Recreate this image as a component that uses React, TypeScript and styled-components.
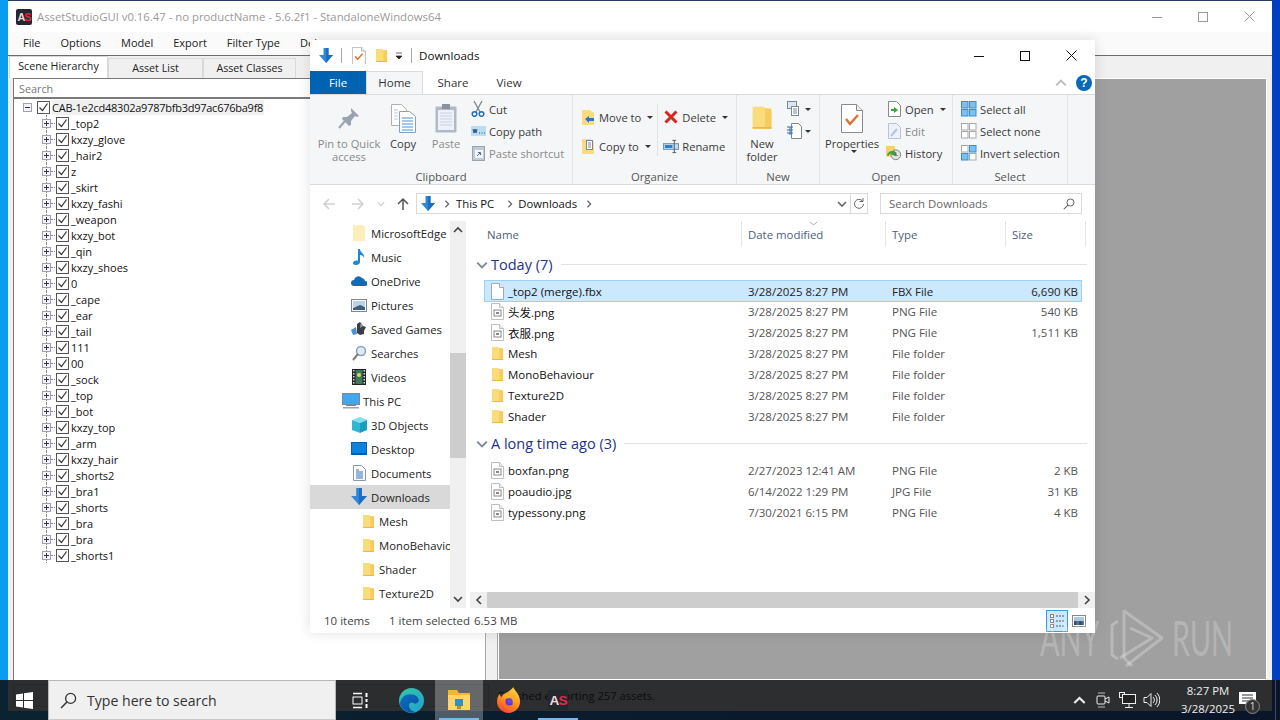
import React from "react";
import styled, { createGlobalStyle } from "styled-components";

const Global = createGlobalStyle`
  html, body { margin: 0; padding: 0; width: 1280px; height: 720px; overflow: hidden; }
  body { font-family: "Open Sans", "Noto Sans CJK SC", sans-serif; font-size: 11.5px; color: #1a1a1a; }
  #root { width: 1280px; height: 720px; }
  * { box-sizing: border-box; }
`;

const Desktop = styled.div`
  position: relative; width: 1280px; height: 720px; overflow: hidden;
  background: linear-gradient(90deg, #0a9cf0 0, #0a9cf0 8px, #0040c0 1272px);
`;

/* ---------- AssetStudio window ---------- */
const StudioWindow = styled.div`
  position: absolute; left: 8px; top: 0; width: 1264px; height: 711px;
  display: flex; flex-direction: column; background: #f0f0f0; border-top: 1px solid #2b3a67;
`;
const StudioTitle = styled.div`
  height: 31px; flex: none; display: flex; align-items: center; background: #fff; padding-left: 8px; color: #9a9a9a; font-size: 11.34px;
`;
const AppLogo = styled.span<{ $size: number }>`
  width: ${p => p.$size}px; height: ${p => p.$size}px; flex: none; border-radius: 2px; background: #23282e; color: #f6d6dc;
  font: bold ${p => p.$size * 0.68}px "Liberation Sans", sans-serif; display: flex; align-items: center; justify-content: center; letter-spacing: -1px;
`;
const LogoS = styled.span` color: #e8264a; `;
const TitleText = styled.span` margin-left: 5px; flex: 1; white-space: nowrap; `;
const CaptionButton = styled.span<{ $w?: number }>`
  width: ${p => p.$w ?? 46}px; height: 30px; flex: none; display: flex; align-items: center; justify-content: center;
`;
const MenuBar = styled.div`
  height: 24px; flex: none; display: flex; align-items: center; background: #fafafa; border-bottom: 1px solid #6b6b6b; padding: 0 0 2px 15px; gap: 20px; font-size: 11px; color: #222;
`;
const StudioBody = styled.div` flex: 1; display: flex; min-height: 0; padding-left: 5px; `;
const LeftPane = styled.div` width: 472px; flex: none; display: flex; flex-direction: column; `;
const TabStrip = styled.div` height: 22px; flex: none; display: flex; align-items: flex-end; margin-left: -4px; `;
const StudioTab = styled.div<{ $active?: boolean; $w: number }>`
  width: ${p => p.$w}px; height: ${p => (p.$active ? 22 : 20)}px; padding-bottom: ${p => (p.$active ? 3 : 1)}px; display: flex; align-items: center; justify-content: center; font-size: 10.7px; color: #222;
  background: ${p => (p.$active ? "#fff" : "#f0f0f0")}; border: 1px solid #d9d9d9; border-bottom: 0;
`;
const SearchInput = styled.div`
  height: 21px; flex: none; background: #fff; border: 1px solid #7a7a7a; border-bottom-width: 2px; border-right: 0; padding-left: 5px; color: #777; display: flex; align-items: center; font-size: 10.8px;
`;
const Tree = styled.div` flex: 1; background: #fff; border-left: 1px solid #7a7a7a; `;
const TreeRow = styled.div<{ $root?: boolean }>`
  position: relative; height: 16px; display: flex; align-items: center; padding-left: ${p => (p.$root ? 9 : 28)}px; font-size: 11px; color: #111; white-space: nowrap;
`;
const Toggle = styled.span`
  width: 9px; height: 9px; flex: none; border: 1px solid #a0a0b8; background: #f4f4fa; position: relative; margin-right: 5px;
  &::before { content: ""; position: absolute; left: 1px; right: 1px; top: 3px; height: 1px; background: #333; }
`;
const Plus = styled.span`
  position: absolute; left: 3px; top: 1px; width: 1px; height: 5px; background: #333;
`;
const Dots = styled.span`
  position: absolute; left: 32px; top: 0; bottom: 0; border-left: 1px dotted #888;
  &::after { content: ""; position: absolute; left: 4px; top: 8px; width: 4px; border-top: 1px dotted #888; }
`;
const Check = styled.span`
  width: 13px; height: 13px; flex: none; border: 1px solid #555; background: #fff; margin-right: 2px; display: flex;
`;
const TreeLabel = styled.span<{ $on?: boolean }>`
  background: ${p => (p.$on ? "#f0f0f0" : "transparent")}; line-height: 15px; ${p => p.$on ? "letter-spacing: -0.25px; padding-right: 1px;" : ""}
`;
const Splitter = styled.div` width: 13px; flex: none; border-left: 1px solid #a8a8a8; border-right: 1px solid #a8a8a8; background: #f0f0f0; `;
const RightPane = styled.div` flex: 1; display: flex; flex-direction: column; padding: 22px 5px 0 0; `;
const GreyCanvas = styled.div` flex: 1; background: #a0a0a0; border: 1px solid #fff; `;
const StudioStatus = styled.div`
  height: 31px; flex: none; display: flex; align-items: center; padding: 0 0 0 5px; color: #000; font-size: 11.2px;
`;
const Progress = styled.div` width: 476px; height: 23px; border: 1px solid #bcbcbc; background: #e6e6e6; margin-right: 9px; `;

/* ---------- Explorer window ---------- */
const ExplorerWindow = styled.div`
  position: absolute; left: 310px; top: 40px; width: 785px; height: 593px; background: #fff; display: flex; flex-direction: column;
  box-shadow: 0 0 12px rgba(0,0,0,.12);
`;
const ExplorerTitle = styled.div` height: 31px; flex: none; display: flex; align-items: center; padding-left: 8px; font-size: 11.6px; color: #111; `;
const QatSep = styled.span` width: 1px; height: 15px; background: #a8a8a8; margin: 0 7px; flex: none; `;
const QatSlot = styled.span<{ $w: number }>` width: ${p => p.$w}px; flex: none; display: flex; justify-content: center; `;
const ExplorerCaption = styled.div` margin-left: auto; display: flex; padding-right: 1px; `;
const RibbonTabs = styled.div` height: 23px; flex: none; display: flex; align-items: stretch; position: relative; font-size: 11.5px; color: #333; `;
const FileTab = styled.div` width: 56px; background: #0063b1; color: #fff; display: flex; align-items: center; justify-content: center; padding-bottom: 1px; `;
const RibbonTab = styled.div<{ $w: number; $active?: boolean }>`
  width: ${p => p.$w}px; display: flex; align-items: center; justify-content: center; padding-bottom: 1px;
  ${p => p.$active ? "border: 1px solid #dadbdc; border-bottom: 0; background: #f5f6f7;" : ""}
`;
const RibbonRight = styled.div` margin-left: auto; display: flex; align-items: center; gap: 9px; padding-right: 3px; `;
const Help = styled.span`
  width: 16px; height: 16px; border-radius: 50%; background: #0a68b8; color: #fff; font: bold 12px "Liberation Sans", sans-serif; display: flex; align-items: center; justify-content: center;
`;
const Ribbon = styled.div` height: 91px; flex: none; display: flex; background: #f5f6f7; border-top: 1px solid #dadbdc; border-bottom: 1px solid #dadbdc; `;
const RibbonGroup = styled.div<{ $w: number }>`
  width: ${p => p.$w}px; flex: none; display: flex; flex-direction: column; border-right: 1px solid #e2e3e4;
`;
const GroupBody = styled.div` height: 75px; flex: none; display: flex; align-items: flex-start; `;
const GroupLabel = styled.div` flex: 1; text-align: center; font-size: 11.3px; color: #555; line-height: 13px; `;
const BigButton = styled.div<{ $w: number; $off?: boolean; $ml?: number }>`
  width: ${p => p.$w}px; flex: none; margin-left: ${p => p.$ml ?? 0}px; display: flex; flex-direction: column; align-items: center; padding-top: 6px; text-align: center; line-height: 13px;
  color: ${p => (p.$off ? "#8a8a8a" : "#3a3a3a")}; font-size: 11.2px;
`;
const BigIcon = styled.span` height: 34px; display: flex; align-items: center; justify-content: center; margin-bottom: 2px; `;
const SmallColumn = styled.div<{ $gap?: number; $pt?: number; $ml?: number }>`
  display: flex; flex-direction: column; gap: ${p => p.$gap ?? 0}px; padding-top: ${p => p.$pt ?? 3}px; margin-left: ${p => p.$ml ?? 0}px;
`;
const SmallButton = styled.div<{ $off?: boolean }>`
  height: 22px; display: flex; align-items: center; gap: 3px; white-space: nowrap; font-size: 11.2px; color: ${p => (p.$off ? "#8a8a8a" : "#3a3a3a")};
`;
const SmallIcon = styled.span` width: 16px; height: 16px; flex: none; display: flex; align-items: center; justify-content: center; `;
const Caret = styled.span<{ $tight?: boolean }>`
  display: inline-block; width: 0; height: 0; border-left: 3px solid transparent; border-right: 3px solid transparent; border-top: 3px solid #333; margin-left: ${p => (p.$tight ? -1 : 3)}px;
`;
const VSep = styled.span` width: 1px; height: 52px; background: #e2e3e4; margin: 9px 5px 0 4px; flex: none; `;
const AddressRow = styled.div` height: 36px; flex: none; display: flex; align-items: center; padding-top: 1px; `;
const NavArrows = styled.div` width: 106px; flex: none; display: flex; align-items: center; padding-left: 11px; `;
const NavSlot = styled.span<{ $w: number }>` width: ${p => p.$w}px; flex: none; display: flex; justify-content: center; `;
const AddressBox = styled.div`
  width: 452px; height: 21px; flex: none; border: 1px solid #d9d9d9; display: flex; align-items: center; padding-left: 2px; font-size: 11.3px; color: #111;
`;
const Crumb = styled.span` margin: 0 8px 0 0; `;
const AddressEnd = styled.span` margin-left: auto; display: flex; align-items: center; height: 100%; `;
const AddrBtn = styled.span<{ $border?: boolean }>` width: 17px; height: 100%; display: flex; align-items: center; justify-content: center; ${p => p.$border ? "border-left: 1px solid #d9d9d9;" : ""} `;
const SearchBox = styled.div`
  width: 202px; height: 21px; margin-left: 12px; flex: none; border: 1px solid #d9d9d9; display: flex; align-items: center; justify-content: space-between; padding: 0 6px 0 8px; font-size: 11.4px; color: #666;
`;
const Body = styled.div` flex: 1; display: flex; min-height: 0; `;
const NavPane = styled.div` width: 140px; flex: none; overflow: hidden; display: flex; flex-direction: column; `;
const NavRow = styled.div<{ $indent: number; $on?: boolean }>`
  height: 24px; flex: none; display: flex; align-items: center; padding-left: ${p => p.$indent}px; gap: 3px; font-size: 11.3px; color: #222; white-space: nowrap; background: ${p => (p.$on ? "#d9d9d9" : "transparent")};
`;
const NavIcon = styled.span<{ $w?: number }>` width: ${p => p.$w ?? 18}px; height: 18px; flex: none; display: flex; align-items: center; justify-content: center; `;
const VScroll = styled.div` width: 16px; flex: none; background: #f0f0f0; display: flex; flex-direction: column; `;
const ScrollArrow = styled.div` height: 18px; flex: none; display: flex; align-items: center; justify-content: center; `;
const VTrack = styled.div` flex: 1; padding-top: 114px; padding-bottom: 132px; display: flex; `;
const VThumb = styled.div` flex: 1; background: #cdcdcd; `;
const ListPane = styled.div` flex: 1; margin-left: 4px; display: flex; flex-direction: column; min-width: 0; `;
const ListBody = styled.div` flex: 1; `;
const ColHeaders = styled.div` height: 25px; display: grid; grid-template-columns: 272px 144px 120px 80px; font-size: 11.4px; color: #4c607a; `;
const ColHead = styled.div<{ $first?: boolean }>`
  position: relative; display: flex; align-items: center; padding: 2px 0 0 ${p => (p.$first ? 17 : 6)}px; border-right: 1px solid #e5e5e5;
`;
const SortMark = styled.span` position: absolute; left: 67px; top: 0; line-height: 0; `;
const GroupHead = styled.div<{ $mt: number }>`
  height: 21px; margin-top: ${p => p.$mt}px; display: flex; align-items: center; padding: 0 8px 0 6px; font-size: 14.5px; color: #1e3287; white-space: nowrap;
`;
const GroupChevron = styled.span` width: 15px; flex: none; display: flex; `;
const GroupRule = styled.span` flex: 1; height: 1px; background: #e2e2e2; margin: 0 0 0 8px; `;
const RowList = styled.div<{ $mt: number }>` margin-top: ${p => p.$mt}px; margin-left: 14px; width: 598px; display: flex; flex-direction: column; `;
const FileRow = styled.div<{ $on?: boolean }>`
  height: 21px; display: grid; grid-template-columns: 263px 144px 120px 66px; align-items: center; font-size: 11.5px; color: ${p => (p.$on ? "#222" : "#555")};
  ${p => p.$on ? "height: 22px; margin-bottom: -1px; background: #cce8ff; border: 1px solid #99d1ff;" : "border: 1px solid transparent;"}
`;
const FileName = styled.span` display: flex; align-items: center; gap: 3px; padding-left: 5px; color: #111; white-space: nowrap; `;
const FileIcon = styled.span` width: 15px; height: 18px; flex: none; display: flex; align-items: center; justify-content: center; `;
const FileSize = styled.span` text-align: right; `;
const HScroll = styled.div` height: 16px; flex: none; display: flex; background: #f0f0f0; `;
const HArrow = styled.div` width: 17px; flex: none; display: flex; align-items: center; justify-content: center; `;
const HThumb = styled.div` flex: 1; background: #cdcdcd; `;
const StatusBar = styled.div` height: 25px; flex: none; display: flex; align-items: center; padding-left: 14px; font-size: 11.5px; color: #444; `;
const StatusItem = styled.span<{ $w: number }>` width: ${p => p.$w}px; flex: none; white-space: nowrap; `;
const ViewButtons = styled.div` margin-left: auto; display: flex; align-items: center; padding-right: 5px; `;
const ViewBtn = styled.span<{ $on?: boolean }>`
  width: 22px; height: 22px; display: flex; align-items: center; justify-content: center; ${p => p.$on ? "background: #cce8ff; border: 1px solid #3d9ad6;" : ""}
`;

/* ---------- Taskbar ---------- */
const Taskbar = styled.div`
  position: absolute; left: 0; right: 0; bottom: 0; height: 40px; display: flex; align-items: stretch; background: rgba(12, 14, 16, 0.86); color: #fff;
`;
const StartBtn = styled.div` width: 48px; flex: none; display: flex; align-items: center; justify-content: center; `;
const TaskSearch = styled.div`
  width: 288px; flex: none; background: #f0f0f0; border: 1px solid #b8b8b8; border-bottom: 1px solid #c8c8c8; display: flex; align-items: center; gap: 10px; padding-left: 11px; color: #333; font-size: 14.1px;
`;
const TaskItem = styled.div<{ $active?: boolean; $running?: boolean; $w?: number }>`
  position: relative; width: ${p => p.$w ?? 48}px; flex: none; display: flex; align-items: center; justify-content: center;
  background: ${p => (p.$active ? "rgba(255,255,255,.28)" : "transparent")};
  ${p => p.$running ? `&::after { content: ""; position: absolute; left: 4px; right: 4px; bottom: 0; height: 2px; background: #76b9ed; }` : ""}
`;
const Tray = styled.div` margin-left: auto; display: flex; align-items: center; `;
const TrayIcon = styled.span` width: 24px; height: 40px; display: flex; align-items: center; justify-content: center; `;
const Clock = styled.div` width: 60px; margin: -1px 0 0 15px; text-align: center; font-size: 11.4px; line-height: 18px; color: #eee; white-space: nowrap; `;
const Notify = styled.div` position: relative; width: 18px; height: 40px; display: flex; align-items: center; justify-content: center; `;
const NotifyBadge = styled.span`
  position: absolute; left: 7px; bottom: 6px; width: 15px; height: 15px; border-radius: 50%; background: #333; border: 1px solid #888; font-size: 10px; line-height: 13px; text-align: center; color: #ddd;
`;
const ShowDesktop = styled.div` width: 5px; height: 40px; margin-left: 19px; border-left: 1px solid rgba(255,255,255,.22); `;

/* ---------- Watermark ---------- */
const Watermark = styled.div`
  position: absolute; left: 1040px; top: 608px; height: 60px; display: flex; align-items: center; color: rgba(255,255,255,.24); pointer-events: none;
  font: 400 48px/1 Lato, "Open Sans", sans-serif;
`;
const WatermarkWord = styled.span<{ $w: number; $ml?: number }>`
  display: block; width: ${p => p.$w}px; margin-left: ${p => p.$ml ?? 0}px; white-space: nowrap; transform: scaleX(0.6); transform-origin: left center;
`;

/* ---------- Icons ---------- */
const Folder = ({ s = 16 }: { s?: number }) => (
  <svg width={s} height={s * 1.15} viewBox="0 0 14 16">
    <path d="M1 1h7l1 1h4v13H1z" fill="#fbdc7c" />
    <path d="M9 2l4 1v12H9z" fill="#f4cc60" />
    <path d="M1 14h12v1H1z" fill="#e8b840" />
  </svg>
);
const PaleFolder = () => (
  <svg width="14" height="18" viewBox="0 0 14 18"><path d="M1 1h9l3 1v15H1z" fill="#fdedbb" /></svg>
);
const Doc = () => (
  <svg width="13" height="17" viewBox="0 0 13 17">
    <path d="M.5.5h8l4 4v12H.5z" fill="#fff" stroke="#bfbfbf" />
    <path d="M8.5.5v4h4" fill="#eee" stroke="#bfbfbf" />
    <rect x="3" y="7" width="7" height="6" fill="#fff" stroke="#888" />
    <rect x="5" y="9" width="3" height="2" fill="#888" />
  </svg>
);
const BlankDoc = () => (
  <svg width="13" height="17" viewBox="0 0 13 17">
    <path d="M.5.5h8l4 4v12H.5z" fill="#fff" stroke="#a8a8a8" />
    <path d="M8.5.5v4h4" fill="#f4f4f4" stroke="#a8a8a8" />
  </svg>
);
const DownArrow = ({ s = 16 }: { s?: number }) => (
  <svg width={s} height={s} viewBox="0 0 16 16">
    <path d="M5.500 0h5v7H15l-7 8-7-8h4.500z" fill="#2f87da" />
    <path d="M8 0h2.500v7H15l-7 8z" fill="#1d6cbf" />
  </svg>
);
const Chev = ({ d, c = "#555", s = 10 }: { d: "up" | "down" | "left" | "right"; c?: string; s?: number }) => {
  const p = { up: "M1 7l4-4 4 4", down: "M1 3l4 4 4-4", left: "M7 1L3 5l4 4", right: "M3 1l4 4-4 4" }[d];
  return <svg width={s} height={s} viewBox="0 0 10 10"><path d={p} fill="none" stroke={c} strokeWidth="1.600" /></svg>;
};
const ArrowLeft = ({ c }: { c: string }) => (
  <svg width="14" height="14" viewBox="0 0 14 14"><path d="M13 7H2M7 2L2 7l5 5" fill="none" stroke={c} strokeWidth="1.500" /></svg>
);
const ArrowRight = ({ c }: { c: string }) => (
  <svg width="14" height="14" viewBox="0 0 14 14"><path d="M1 7h11M7 2l5 5-5 5" fill="none" stroke={c} strokeWidth="1.500" /></svg>
);
const ArrowUp = ({ c }: { c: string }) => (
  <svg width="14" height="14" viewBox="0 0 14 14"><path d="M7 13V2M2 7l5-5 5 5" fill="none" stroke={c} strokeWidth="1.500" /></svg>
);
const PropsIcon = ({ s = 1 }: { s?: number }) => (
  <svg width={22 * s} height={29 * s} viewBox="0 0 22 29">
    <path d="M.5.5h15l6 6v22H.5z" fill="#fff" stroke="#8a8a8a" />
    <path d="M15.500.5v6h6" fill="#eee" stroke="#8a8a8a" />
    <path d="M5 15l4 5 8-9" fill="none" stroke="#e0702a" strokeWidth="2.400" />
  </svg>
);
const Pin = () => (
  <svg width="24" height="24" viewBox="0 0 24 24">
    <path d="M14 2l8 8-2 1-2-1-4 5 0 4-2 1-7-7 1-2 4 0 5-4-1-2z" fill="#9aa4b0" />
    <path d="M8 15l-6 7" stroke="#9aa4b0" strokeWidth="2" />
  </svg>
);
const CopyBig = () => (
  <svg width="25" height="29" viewBox="0 0 25 29">
    <path d="M.5.5h10l5 5v16H.5z" fill="#fff" stroke="#b0b0b0" />
    <path d="M8.500 7.500h10l6 5v16h-16z" fill="#fff" stroke="#8aa0b8" />
    {[14, 17, 20, 23, 26].map(y => <path key={y} d={`M11 ${y}h11`} stroke="#4a90d9" />)}
    {[6, 9, 12, 15].map(y => <path key={y} d={`M3 ${y}h4`} stroke="#b8c8e0" />)}
  </svg>
);
const PasteBig = () => (
  <svg width="22" height="30" viewBox="0 0 22 30">
    <rect x=".5" y="3.500" width="21" height="26" rx="1" fill="#b0bac6" />
    <rect x="3" y="7" width="16" height="20" fill="#eef1f7" />
    {[10, 13, 16, 19, 22].map(y => <path key={y} d={`M5 ${y}h12`} stroke="#c9d2e4" />)}
    <rect x="7" y="1" width="8" height="5" fill="#8a94a0" />
  </svg>
);
const Scissors = () => (
  <svg width="14" height="16" viewBox="0 0 14 16">
    <path d="M3 0l6 11M11 0L5 11" stroke="#7a8896" strokeWidth="1.300" fill="none" />
    <circle cx="3.500" cy="13" r="2.300" fill="none" stroke="#1f6fb5" strokeWidth="1.500" />
    <circle cx="10.500" cy="13" r="2.300" fill="none" stroke="#1f6fb5" strokeWidth="1.500" />
  </svg>
);
const CopyPath = () => (
  <svg width="15" height="10" viewBox="0 0 15 10">
    <rect width="15" height="10" fill="#bcdcf4" />
    <path d="M2 3l1 4 1-4 1 4 1-4M8 7h1M10.500 7h1M13 7h1" stroke="#24527a" fill="none" />
  </svg>
);
const PasteShortcut = () => (
  <svg width="13" height="16" viewBox="0 0 13 16">
    <rect x=".5" y="1.500" width="12" height="14" fill="#c2cad6" stroke="#9aa4b0" />
    <rect x="3" y="5" width="8" height="8" fill="#f2f4f8" />
    <path d="M5 11l3-3M6 7.500h2.500V10" stroke="#4d6a8c" fill="none" />
  </svg>
);
const MoveTo = () => (
  <svg width="14" height="17" viewBox="0 0 14 17">
    <path d="M1 1h8l4 3v12H1z" fill="#fbdc7c" />
    <path d="M4 10l4-3v2h5v3H8v2z" fill="#2a78c4" />
  </svg>
);
const CopyTo = () => (
  <svg width="14" height="17" viewBox="0 0 14 17">
    <path d="M1 1h8l4 3v12H1z" fill="#fbdc7c" />
    <rect x="5.500" y="2.500" width="6" height="9" fill="#fff" stroke="#7a8896" />
    <path d="M7 5h3M7 7h3M7 9h3" stroke="#7a8896" />
  </svg>
);
const Cross = () => (
  <svg width="14" height="14" viewBox="0 0 14 14"><path d="M1.500 1.500l11 11M12.500 1.500l-11 11" stroke="#d8261c" strokeWidth="3" /></svg>
);
const Rename = () => (
  <svg width="17" height="15" viewBox="0 0 17 15">
    <rect x=".5" y="4.500" width="16" height="6" fill="#bcdcf4" stroke="#5f8fb8" />
    <rect x="2" y="6" width="8" height="3" fill="#2a78c4" />
    <path d="M12 1v13M10 1h4M10 14h4" stroke="#555" fill="none" />
  </svg>
);
const EasyAccess = () => (
  <svg width="16" height="16" viewBox="0 0 16 16">
    <rect x=".5" y=".5" width="9" height="7" fill="#dbe6f2" stroke="#7a8896" />
    <rect x="4.500" y="5.500" width="7" height="9" fill="#fff" stroke="#7a8896" />
    <path d="M6 8h4M6 10h4M6 12h4" stroke="#7a8896" />
  </svg>
);
const NewItem = () => (
  <svg width="16" height="16" viewBox="0 0 16 16">
    <path d="M4.500.5h7l3 3v12h-10z" fill="#fff" stroke="#7a8896" />
    <path d="M0 4h6M0 7h6M0 10h6M3 4v8" stroke="#2a6fb5" fill="none" />
  </svg>
);
const OpenIcon = () => (
  <svg width="13" height="16" viewBox="0 0 13 16">
    <path d="M.5.5h8l4 4v11H.5z" fill="#fff" stroke="#8a8a8a" />
    <path d="M3 8h3V6l4 3-4 3v-2H3z" fill="#3aa13a" />
  </svg>
);
const EditIcon = () => (
  <svg width="13" height="16" viewBox="0 0 13 16">
    <path d="M.5.5h8l4 4v11H.5z" fill="#eef2f8" stroke="#b5c4d8" />
    <path d="M3 13l6-7" stroke="#b5c4d8" strokeWidth="2" />
  </svg>
);
const History = () => (
  <svg width="18" height="16" viewBox="0 0 18 16">
    <path d="M0 0h10v12H0z" fill="#f5d264" />
    <circle cx="11" cy="10" r="5.500" fill="#e0e4e8" stroke="#777" />
    <path d="M2 11a5 5 0 0 1 6-4l-1 2 3 1-1-4" fill="none" stroke="#3aa13a" strokeWidth="2" />
    <path d="M11 7v3l2 1" fill="none" stroke="#444" />
  </svg>
);
const Grid4 = ({ mode }: { mode: "all" | "none" | "inv" }) => {
  const on = "#7cc0f0", onS = "#3a8fd0", off = "#fff", offS = "#a8a8a8";
  const cell = (x: number, y: number, act: boolean) => (
    <rect key={`${x}${y}`} x={x + 0.5} y={y + 0.5} width="6.500" height="6.500" fill={act ? on : off} stroke={act ? onS : offS} />
  );
  const a = mode === "all", n = mode === "none";
  return (
    <svg width="16" height="16" viewBox="0 0 16 16">
      {cell(0, 0, a)}{cell(8, 0, a || !n)}{cell(0, 8, a || !n)}{cell(8, 8, a)}
    </svg>
  );
};
const Music = () => (
  <svg width="14" height="18" viewBox="0 0 14 18"><path d="M6 1h2c0 4 5 4 4 9-1-3-3-3-4-3v7c0 2-2 3-4 3s-3-1-3-2c0-2 3-3 5-2z" fill="#1f87d8" /></svg>
);
const Cloud = () => (
  <svg width="16" height="12" viewBox="0 0 16 12"><path d="M3 11a3 3 0 0 1 0-6 4.500 4.500 0 0 1 8-2 3.500 3.500 0 0 1 3 3 2.500 2.500 0 0 1 0 5z" fill="#0f6cbd" /></svg>
);
const Pictures = () => (
  <svg width="16" height="13" viewBox="0 0 16 13">
    <rect x=".5" y=".5" width="15" height="12" fill="#fff" stroke="#7a8896" />
    <path d="M2 2h12v5L2 8z" fill="#b9d3ea" /><path d="M2 9l7-3 5 2v3H2z" fill="#3f5f7f" />
  </svg>
);
const Saved = () => (
  <svg width="17" height="16" viewBox="0 0 17 16">
    <path d="M0 9l5-3 1 7-4 1z" fill="#4d8fd0" /><path d="M6 3l3-2 3 4 3 1-2 4v3l-4 1-3-2z" fill="#3a3f46" />
    <path d="M10 1l2 4-3 2z" fill="#9aa4b0" />
  </svg>
);
const Searches = () => (
  <svg width="16" height="16" viewBox="0 0 16 16">
    <circle cx="10" cy="6" r="4.500" fill="#dbeaf6" stroke="#8aa0b8" strokeWidth="1.500" />
    <path d="M7 9l-5 6" stroke="#8a7a6a" strokeWidth="2" />
  </svg>
);
const Videos = () => (
  <svg width="14" height="16" viewBox="0 0 14 16">
    <rect width="14" height="16" fill="#222" />
    {[1, 4, 7, 10, 13].map(y => <g key={y}><rect x="1" y={y} width="1.500" height="1.500" fill="#ddd" /><rect x="11.500" y={y} width="1.500" height="1.500" fill="#ddd" /></g>)}
    <rect x="3.500" y="1" width="7" height="14" fill="#3d7a5a" /><circle cx="7" cy="6" r="2" fill="#e8d060" />
  </svg>
);
const ThisPc = () => (
  <svg width="18" height="16" viewBox="0 0 18 16">
    <rect x=".5" y=".5" width="17" height="11" fill="#3fa8ee" stroke="#7a8896" />
    <rect x="4" y="12" width="10" height="1" fill="#7a8896" /><rect x="1" y="14" width="16" height="1.500" fill="#9aa4b0" />
  </svg>
);
const Cube = () => (
  <svg width="17" height="16" viewBox="0 0 17 16">
    <path d="M1 3l8-3 7 3-7 3z" fill="#7fe0ee" /><path d="M1 3l8 3v10l-8-3z" fill="#2fb6d0" /><path d="M9 6l7-3v10l-7 3z" fill="#189ec0" />
  </svg>
);
const DesktopIc = () => (
  <svg width="16" height="14" viewBox="0 0 16 14"><rect x=".5" y=".5" width="15" height="12" fill="#0a84e0" stroke="#0a5fa8" /><rect x="1" y="11" width="14" height="1.500" fill="#075a9e" /></svg>
);
const Documents = () => (
  <svg width="13" height="16" viewBox="0 0 13 16">
    <path d="M.5.5h8l4 4v11H.5z" fill="#fff" stroke="#8a9aaa" />
    <path d="M3 5h3M3 7h7M3 9h7M3 11h7M3 13h7" stroke="#2a6fb5" />
  </svg>
);
const WinLogo = () => (
  <svg width="17" height="17" viewBox="0 0 17 17">
    <path d="M0 2.400L7 1.400v6.700H0zM8 1.300L17 0v8.100H8zM0 9h7v6.600L0 14.600zM8 9h9v8L8 15.700z" fill="#fff" />
  </svg>
);
const SearchGlass = ({ c = "#333", s = 16 }: { c?: string; s?: number }) => (
  <svg width={s} height={s} viewBox="0 0 16 16"><circle cx="10" cy="6" r="4.700" fill="none" stroke={c} strokeWidth="1.200" /><path d="M6.500 9.500L1 15" stroke={c} strokeWidth="1.400" /></svg>
);
const TaskView = () => (
  <svg width="16" height="17" viewBox="0 0 16 17">
    <rect x="1" y="5" width="9" height="7" fill="none" stroke="#fff" />
    <path d="M1 1.500h9M1 15.500h9" stroke="#fff" strokeWidth="1.600" />
    <path d="M14.500 1v4M14.500 7v3M14.500 12v4" stroke="#fff" strokeWidth="2" />
  </svg>
);
const Edge = () => (
  <svg width="25" height="25" viewBox="0 0 24 24">
    <defs>
      <linearGradient id="edgeA" x1="0" y1="0" x2="1" y2="1"><stop offset="0" stopColor="#36c9a0" /><stop offset="1" stopColor="#1f9fd6" /></linearGradient>
      <linearGradient id="edgeB" x1="0" y1="0" x2="1" y2="1"><stop offset="0" stopColor="#0c6fc4" /><stop offset="1" stopColor="#0a4f9c" /></linearGradient>
    </defs>
    <circle cx="12" cy="12" r="12" fill="url(#edgeA)" />
    <path d="M1 16C1 9 6 6 11 6c5 0 8 3 8 6 0 2-2 3-4 3-1 0-1-1-2-1-3 0-4 2-3 5 1 2 3 4 6 4a12 12 0 0 1-15-7z" fill="url(#edgeB)" />
  </svg>
);
const Explorer = () => (
  <svg width="24" height="22" viewBox="0 0 24 22">
    <path d="M1 1h9l2 3h11v4H1z" fill="#f2b632" />
    <path d="M1 6h22v15H1z" fill="#fcd768" />
    <rect x="8" y="10" width="8" height="7" fill="#2a8fd8" /><rect x="10" y="17" width="4" height="3" fill="#c48a1a" />
  </svg>
);
const Firefox = () => (
  <svg width="24" height="26" viewBox="0 0 25 27">
    <defs>
      <linearGradient id="ffA" x1="0.700" y1="0" x2="0.200" y2="1"><stop offset="0" stopColor="#ffd23a" /><stop offset=".55" stopColor="#ff8a1e" /><stop offset="1" stopColor="#f0403a" /></linearGradient>
      <radialGradient id="ffB"><stop offset="0" stopColor="#7a50e0" /><stop offset="1" stopColor="#5a2fc0" /></radialGradient>
    </defs>
    <path d="M17 0c1 4 7 7 7 15a12 12 0 0 1-24 0C0 11 2 8 3 7c0 2 1 3 2 3 1-4 8-4 12-10z" fill="url(#ffA)" />
    <circle cx="13" cy="15" r="4.200" fill="url(#ffB)" />
    <path d="M6 10c2 4 5 1 8 2 2 1 3 3 2 6 3-2 3-7 0-9-4-2-8-1-10 1z" fill="#ffb020" opacity=".85" />
  </svg>
);
const TrayCam = () => (
  <svg width="15" height="18" viewBox="0 0 15 18">
    <rect x="1" y="5" width="8" height="8" rx="1" fill="none" stroke="#eee" /><path d="M9 8l4-2v6l-4-2" fill="none" stroke="#eee" />
    <path d="M2 2h7M2 16h7" stroke="#bbb" />
  </svg>
);
const TrayNet = () => (
  <svg width="17" height="16" viewBox="0 0 17 16">
    <rect x=".5" y=".5" width="5" height="5" fill="none" stroke="#eee" /><rect x="3.500" y="2.500" width="13" height="9" fill="#222" stroke="#eee" />
    <path d="M10 11.500V15M6 15.500h8" stroke="#eee" />
  </svg>
);
const TraySpeaker = () => (
  <svg width="17" height="16" viewBox="0 0 17 16">
    <path d="M1 5.500h3l4-4v13l-4-4H1z" fill="none" stroke="#eee" />
    <path d="M10 5a4 4 0 0 1 0 6M12 3a7 7 0 0 1 0 10M14 1a10 10 0 0 1 0 14" fill="none" stroke="#eee" />
  </svg>
);
const NotifyIc = () => (
  <svg width="17" height="16" viewBox="0 0 17 16">
    <path d="M0 0h17v12h-6l-3 4v-4H0z" fill="#fff" />
    <path d="M3 3h11M3 6h11M3 9h7" stroke="#333" />
  </svg>
);
const DetailsView = () => (
  <svg width="16" height="16" viewBox="0 0 16 16">
    {[1, 6, 11].map(y => <g key={y}><rect x="1.500" y={y + 0.5} width="3" height="3" fill="#fff" stroke="#888" /><path d={`M7 ${y + 2}h8`} stroke="#555" strokeDasharray="2 1" /></g>)}
  </svg>
);
const LargeView = () => (
  <svg width="14" height="12" viewBox="0 0 14 12"><rect x=".5" y=".5" width="13" height="11" fill="#fff" stroke="#888" /><path d="M2 2h10v4H2z" fill="#a8c8e4" /><path d="M2 6h10v4H2z" fill="#33506e" /></svg>
);
const XIcon = ({ c = "#111" }: { c?: string }) => (
  <svg width="11" height="11" viewBox="0 0 11 11"><path d="M.5.5l10 10M10.500.5l-10 10" stroke={c} /></svg>
);
const MaxIcon = ({ c = "#111" }: { c?: string }) => (
  <svg width="10" height="10" viewBox="0 0 10 10"><rect x=".5" y=".5" width="9" height="9" fill="none" stroke={c} /></svg>
);
const MinIcon = ({ c = "#111" }: { c?: string }) => (
  <svg width="10" height="10" viewBox="0 0 10 10"><path d="M0 5.500h10" stroke={c} /></svg>
);
const Tick = () => (
  <svg width="11" height="11" viewBox="0 0 11 11"><path d="M1.500 5.500l3 3 5-7" fill="none" stroke="#333" strokeWidth="1.200" /></svg>
);
const WatermarkLogo = () => (
  <svg width="56" height="60" viewBox="0 0 56 60" fill="none" stroke="rgba(255,255,255,.26)" strokeWidth="3" strokeLinejoin="round">
    <path d="M8 13L2 17V47L8 51" />
    <path d="M14 50V3L52 30L16 58" />
    <path d="M20 20L42 30L10 50" />
    <path d="M14 50L22 58" />
  </svg>
);

/* ---------- Data ---------- */
const treeItems = ["_top2","kxzy_glove","_hair2","z","_skirt","kxzy_fashi","_weapon","kxzy_bot","_qin","kxzy_shoes","0","_cape","_ear","_tail","111","00","_sock","_top","_bot","kxzy_top","_arm","kxzy_hair","_shorts2","_bra1","_shorts","_bra","_bra","_shorts1"];

type NavItem = { label: string; icon: React.ReactNode; indent: number; on?: boolean; w?: number };
const navItems: NavItem[] = [
  { label: "MicrosoftEdge", icon: <PaleFolder />, indent: 40 },
  { label: "Music", icon: <Music />, indent: 40 },
  { label: "OneDrive", icon: <Cloud />, indent: 40 },
  { label: "Pictures", icon: <Pictures />, indent: 40 },
  { label: "Saved Games", icon: <Saved />, indent: 40 },
  { label: "Searches", icon: <Searches />, indent: 40 },
  { label: "Videos", icon: <Videos />, indent: 40 },
  { label: "This PC", icon: <ThisPc />, indent: 32 },
  { label: "3D Objects", icon: <Cube />, indent: 40 },
  { label: "Desktop", icon: <DesktopIc />, indent: 40 },
  { label: "Documents", icon: <Documents />, indent: 40 },
  { label: "Downloads", icon: <DownArrow s={18} />, indent: 40, on: true },
  { label: "Mesh", icon: <Folder s={13} />, indent: 50, w: 16 },
  { label: "MonoBehaviour", icon: <Folder s={13} />, indent: 50, w: 16 },
  { label: "Shader", icon: <Folder s={13} />, indent: 50, w: 16 },
  { label: "Texture2D", icon: <Folder s={13} />, indent: 50, w: 16 },
];

type FileItem = { name: string; date: string; type: string; size: string; icon: React.ReactNode; on?: boolean };
const D = "3/28/2025 8:27 PM";
const today: FileItem[] = [
  { name: "_top2 (merge).fbx", date: D, type: "FBX File", size: "6,690 KB", icon: <BlankDoc />, on: true },
  { name: "头发.png", date: D, type: "PNG File", size: "540 KB", icon: <Doc /> },
  { name: "衣服.png", date: D, type: "PNG File", size: "1,511 KB", icon: <Doc /> },
  { name: "Mesh", date: D, type: "File folder", size: "", icon: <Folder s={13} /> },
  { name: "MonoBehaviour", date: D, type: "File folder", size: "", icon: <Folder s={13} /> },
  { name: "Texture2D", date: D, type: "File folder", size: "", icon: <Folder s={13} /> },
  { name: "Shader", date: D, type: "File folder", size: "", icon: <Folder s={13} /> },
];
const older: FileItem[] = [
  { name: "boxfan.png", date: "2/27/2023 12:41 AM", type: "PNG File", size: "2 KB", icon: <Doc /> },
  { name: "poaudio.jpg", date: "6/14/2022 1:29 PM", type: "JPG File", size: "31 KB", icon: <Doc /> },
  { name: "typessony.png", date: "7/30/2021 6:15 PM", type: "PNG File", size: "4 KB", icon: <Doc /> },
];

const Rows = ({ items, mt }: { items: FileItem[]; mt: number }) => (
  <RowList $mt={mt}>
    {items.map(f => (
      <FileRow key={f.name} $on={f.on}>
        <FileName><FileIcon>{f.icon}</FileIcon>{f.name}</FileName>
        <span>{f.date}</span>
        <span>{f.type}</span>
        <FileSize>{f.size}</FileSize>
      </FileRow>
    ))}
  </RowList>
);

export default function App() {
  return (
    <Desktop>
      <Global />
      <StudioWindow>
        <StudioTitle>
          <AppLogo $size={16}>A<LogoS>S</LogoS></AppLogo>
          <TitleText>AssetStudioGUI v0.16.47 - no productName - 5.6.2f1 - StandaloneWindows64</TitleText>
          <CaptionButton><MinIcon c="#999" /></CaptionButton>
          <CaptionButton><MaxIcon c="#999" /></CaptionButton>
          <CaptionButton><XIcon c="#999" /></CaptionButton>
        </StudioTitle>
        <MenuBar>
          <span>File</span><span>Options</span><span>Model</span><span>Export</span><span>Filter Type</span><span>Debug</span>
        </MenuBar>
        <StudioBody>
          <LeftPane>
            <TabStrip>
              <StudioTab $active $w={99}>Scene Hierarchy</StudioTab>
              <StudioTab $w={95}>Asset List</StudioTab>
              <StudioTab $w={93}>Asset Classes</StudioTab>
            </TabStrip>
            <SearchInput>Search</SearchInput>
            <Tree>
              <TreeRow $root>
                <Toggle />
                <Check><Tick /></Check>
                <TreeLabel $on>CAB-1e2cd48302a9787bfb3d97ac676ba9f8</TreeLabel>
              </TreeRow>
              {treeItems.map((t, i) => (
                <TreeRow key={i}>
                  <Dots />
                  <Toggle><Plus /></Toggle>
                  <Check><Tick /></Check>
                  <TreeLabel>{t}</TreeLabel>
                </TreeRow>
              ))}
            </Tree>
          </LeftPane>
          <Splitter />
          <RightPane><GreyCanvas /></RightPane>
        </StudioBody>
        <StudioStatus>
          <Progress />
          Finished exporting 257 assets.
        </StudioStatus>
      </StudioWindow>

      <ExplorerWindow>
        <ExplorerTitle>
          <DownArrow />
          <QatSep />
          <QatSlot $w={20}><PropsIcon s={0.62} /></QatSlot>
          <QatSlot $w={24}><Folder s={13} /></QatSlot>
          <QatSlot $w={11}><svg width="8" height="8" viewBox="0 0 8 8"><path d="M1 1h6M1 4h6L4 7z" fill="#222" stroke="#222" strokeWidth=".7" /></svg></QatSlot>
          <QatSep />
          {"Downloads"}
          <ExplorerCaption>
            <CaptionButton><MinIcon /></CaptionButton>
            <CaptionButton><MaxIcon /></CaptionButton>
            <CaptionButton><XIcon /></CaptionButton>
          </ExplorerCaption>
        </ExplorerTitle>
        <RibbonTabs>
          <FileTab>File</FileTab>
          <RibbonTab $w={57} $active>Home</RibbonTab>
          <RibbonTab $w={60}>Share</RibbonTab>
          <RibbonTab $w={52}>View</RibbonTab>
          <RibbonRight>
            <Chev d="up" c="#bbb" s={12} />
            <Help>?</Help>
          </RibbonRight>
        </RibbonTabs>
        <Ribbon>
          <RibbonGroup $w={263}>
            <GroupBody>
              <BigButton $w={72} $ml={3} $off><BigIcon><Pin /></BigIcon>Pin to Quick<br />access</BigButton>
              <BigButton $w={36}><BigIcon><CopyBig /></BigIcon>Copy</BigButton>
              <BigButton $w={44} $ml={3} $off><BigIcon><PasteBig /></BigIcon>Paste</BigButton>
              <SmallColumn $ml={2}>
                <SmallButton><SmallIcon><Scissors /></SmallIcon>Cut</SmallButton>
                <SmallButton><SmallIcon><CopyPath /></SmallIcon>Copy path</SmallButton>
                <SmallButton $off><SmallIcon><PasteShortcut /></SmallIcon>Paste shortcut</SmallButton>
              </SmallColumn>
            </GroupBody>
            <GroupLabel>Clipboard</GroupLabel>
          </RibbonGroup>
          <RibbonGroup $w={164}>
            <GroupBody>
              <SmallColumn $ml={7} $pt={11} $gap={7}>
                <SmallButton><SmallIcon><MoveTo /></SmallIcon>Move to<Caret /></SmallButton>
                <SmallButton><SmallIcon><CopyTo /></SmallIcon>Copy to<Caret /></SmallButton>
              </SmallColumn>
              <VSep />
              <SmallColumn $pt={11} $gap={7}>
                <SmallButton><SmallIcon><Cross /></SmallIcon>Delete<Caret /></SmallButton>
                <SmallButton><SmallIcon><Rename /></SmallIcon>Rename</SmallButton>
              </SmallColumn>
            </GroupBody>
            <GroupLabel>Organize</GroupLabel>
          </RibbonGroup>
          <RibbonGroup $w={83}>
            <GroupBody>
              <BigButton $w={48} $ml={1}><BigIcon><Folder s={22} /></BigIcon>New<br />folder</BigButton>
              <SmallColumn $ml={1}>
                <SmallButton><SmallIcon><EasyAccess /></SmallIcon><Caret $tight /></SmallButton>
                <SmallButton><SmallIcon><NewItem /></SmallIcon><Caret $tight /></SmallButton>
              </SmallColumn>
            </GroupBody>
            <GroupLabel>New</GroupLabel>
          </RibbonGroup>
          <RibbonGroup $w={133}>
            <GroupBody>
              <BigButton $w={64}><BigIcon><PropsIcon /></BigIcon>Properties<Caret /></BigButton>
              <SmallColumn $ml={2}>
                <SmallButton><SmallIcon><OpenIcon /></SmallIcon>Open<Caret /></SmallButton>
                <SmallButton $off><SmallIcon><EditIcon /></SmallIcon>Edit</SmallButton>
                <SmallButton><SmallIcon><History /></SmallIcon>History</SmallButton>
              </SmallColumn>
            </GroupBody>
            <GroupLabel>Open</GroupLabel>
          </RibbonGroup>
          <RibbonGroup $w={115}>
            <GroupBody>
              <SmallColumn $ml={8}>
                <SmallButton><SmallIcon><Grid4 mode="all" /></SmallIcon>Select all</SmallButton>
                <SmallButton><SmallIcon><Grid4 mode="none" /></SmallIcon>Select none</SmallButton>
                <SmallButton><SmallIcon><Grid4 mode="inv" /></SmallIcon>Invert selection</SmallButton>
              </SmallColumn>
            </GroupBody>
            <GroupLabel>Select</GroupLabel>
          </RibbonGroup>
        </Ribbon>
        <AddressRow>
          <NavArrows>
            <NavSlot $w={16}><ArrowLeft c="#d0d0d0" /></NavSlot>
            <NavSlot $w={13} />
            <NavSlot $w={16}><ArrowRight c="#d0d0d0" /></NavSlot>
            <NavSlot $w={30}><Chev d="down" c="#d0d0d0" s={8} /></NavSlot>
            <NavSlot $w={14}><ArrowUp c="#555" /></NavSlot>
          </NavArrows>
          <AddressBox>
            <NavSlot $w={18}><DownArrow /></NavSlot>
            <NavSlot $w={19}><Chev d="right" c="#666" s={8} /></NavSlot>
            <Crumb>This PC</Crumb>
            <NavSlot $w={16}><Chev d="right" c="#666" s={8} /></NavSlot>
            <Crumb>Downloads</Crumb>
            <Chev d="right" c="#666" s={8} />
            <AddressEnd>
              <AddrBtn><Chev d="down" c="#666" s={10} /></AddrBtn>
              <AddrBtn $border>
                <svg width="12" height="12" viewBox="0 0 12 12"><path d="M9.500 3a4.500 4.500 0 1 0 1 3M10 0v3.500H6.500" fill="none" stroke="#666" /></svg>
              </AddrBtn>
            </AddressEnd>
          </AddressBox>
          <SearchBox>Search Downloads<SearchGlass c="#555" s={12} /></SearchBox>
        </AddressRow>
        <Body>
          <NavPane>
            {navItems.map(n => (
              <NavRow key={n.label} $indent={n.indent} $on={n.on}>
                <NavIcon $w={n.w}>{n.icon}</NavIcon>{n.label}
              </NavRow>
            ))}
          </NavPane>
          <VScroll>
            <ScrollArrow><Chev d="up" c="#444" /></ScrollArrow>
            <VTrack><VThumb /></VTrack>
            <ScrollArrow><Chev d="down" c="#444" /></ScrollArrow>
          </VScroll>
          <ListPane>
            <ListBody>
              <ColHeaders>
                <ColHead $first>Name</ColHead>
                <ColHead>Date modified<SortMark><svg width="9" height="5" viewBox="0 0 9 5"><path d="M1 1l3.500 3L8 1" fill="none" stroke="#aaa" /></svg></SortMark></ColHead>
                <ColHead>Type</ColHead>
                <ColHead>Size</ColHead>
              </ColHeaders>
              <GroupHead $mt={8}>
                <GroupChevron><Chev d="down" c="#7a8a9a" s={12} /></GroupChevron>
                Today (7)<GroupRule />
              </GroupHead>
              <Rows items={today} mt={5} />
              <GroupHead $mt={6}>
                <GroupChevron><Chev d="down" c="#7a8a9a" s={12} /></GroupChevron>
                A long time ago (3)<GroupRule />
              </GroupHead>
              <Rows items={older} mt={6} />
            </ListBody>
            <HScroll>
              <HArrow><Chev d="left" c="#444" /></HArrow>
              <HThumb />
              <HArrow><Chev d="right" c="#444" /></HArrow>
            </HScroll>
          </ListPane>
        </Body>
        <StatusBar>
          <StatusItem $w={65}>10 items</StatusItem>
          <StatusItem $w={85}>1 item selected</StatusItem>
          <StatusItem $w={60}>6.53 MB</StatusItem>
          <ViewButtons>
            <ViewBtn $on><DetailsView /></ViewBtn>
            <ViewBtn><LargeView /></ViewBtn>
          </ViewButtons>
        </StatusBar>
      </ExplorerWindow>

      <Watermark>
        <WatermarkWord $w={70}>ANY</WatermarkWord>
        <WatermarkLogo />
        <WatermarkWord $w={58} $ml={6}>RUN</WatermarkWord>
      </Watermark>

      <Taskbar>
        <StartBtn><WinLogo /></StartBtn>
        <TaskSearch><SearchGlass s={17} />Type here to search</TaskSearch>
        <TaskItem><TaskView /></TaskItem>
        <TaskItem $w={3} />
        <TaskItem><Edge /></TaskItem>
        <TaskItem $active $running><Explorer /></TaskItem>
        <TaskItem $w={2} />
        <TaskItem><Firefox /></TaskItem>
        <TaskItem $w={1} />
        <TaskItem $running><AppLogo $size={20}>A<LogoS>S</LogoS></AppLogo></TaskItem>
        <Tray>
          <TrayIcon><Chev d="up" c="#eee" s={13} /></TrayIcon>
          <TrayIcon><TrayCam /></TrayIcon>
          <TrayIcon><TrayNet /></TrayIcon>
          <TrayIcon><TraySpeaker /></TrayIcon>
          <Clock>8:27 PM<br />3/28/2025</Clock>
          <Notify><NotifyIc /><NotifyBadge>1</NotifyBadge></Notify>
          <ShowDesktop />
        </Tray>
      </Taskbar>
    </Desktop>
  );
}
